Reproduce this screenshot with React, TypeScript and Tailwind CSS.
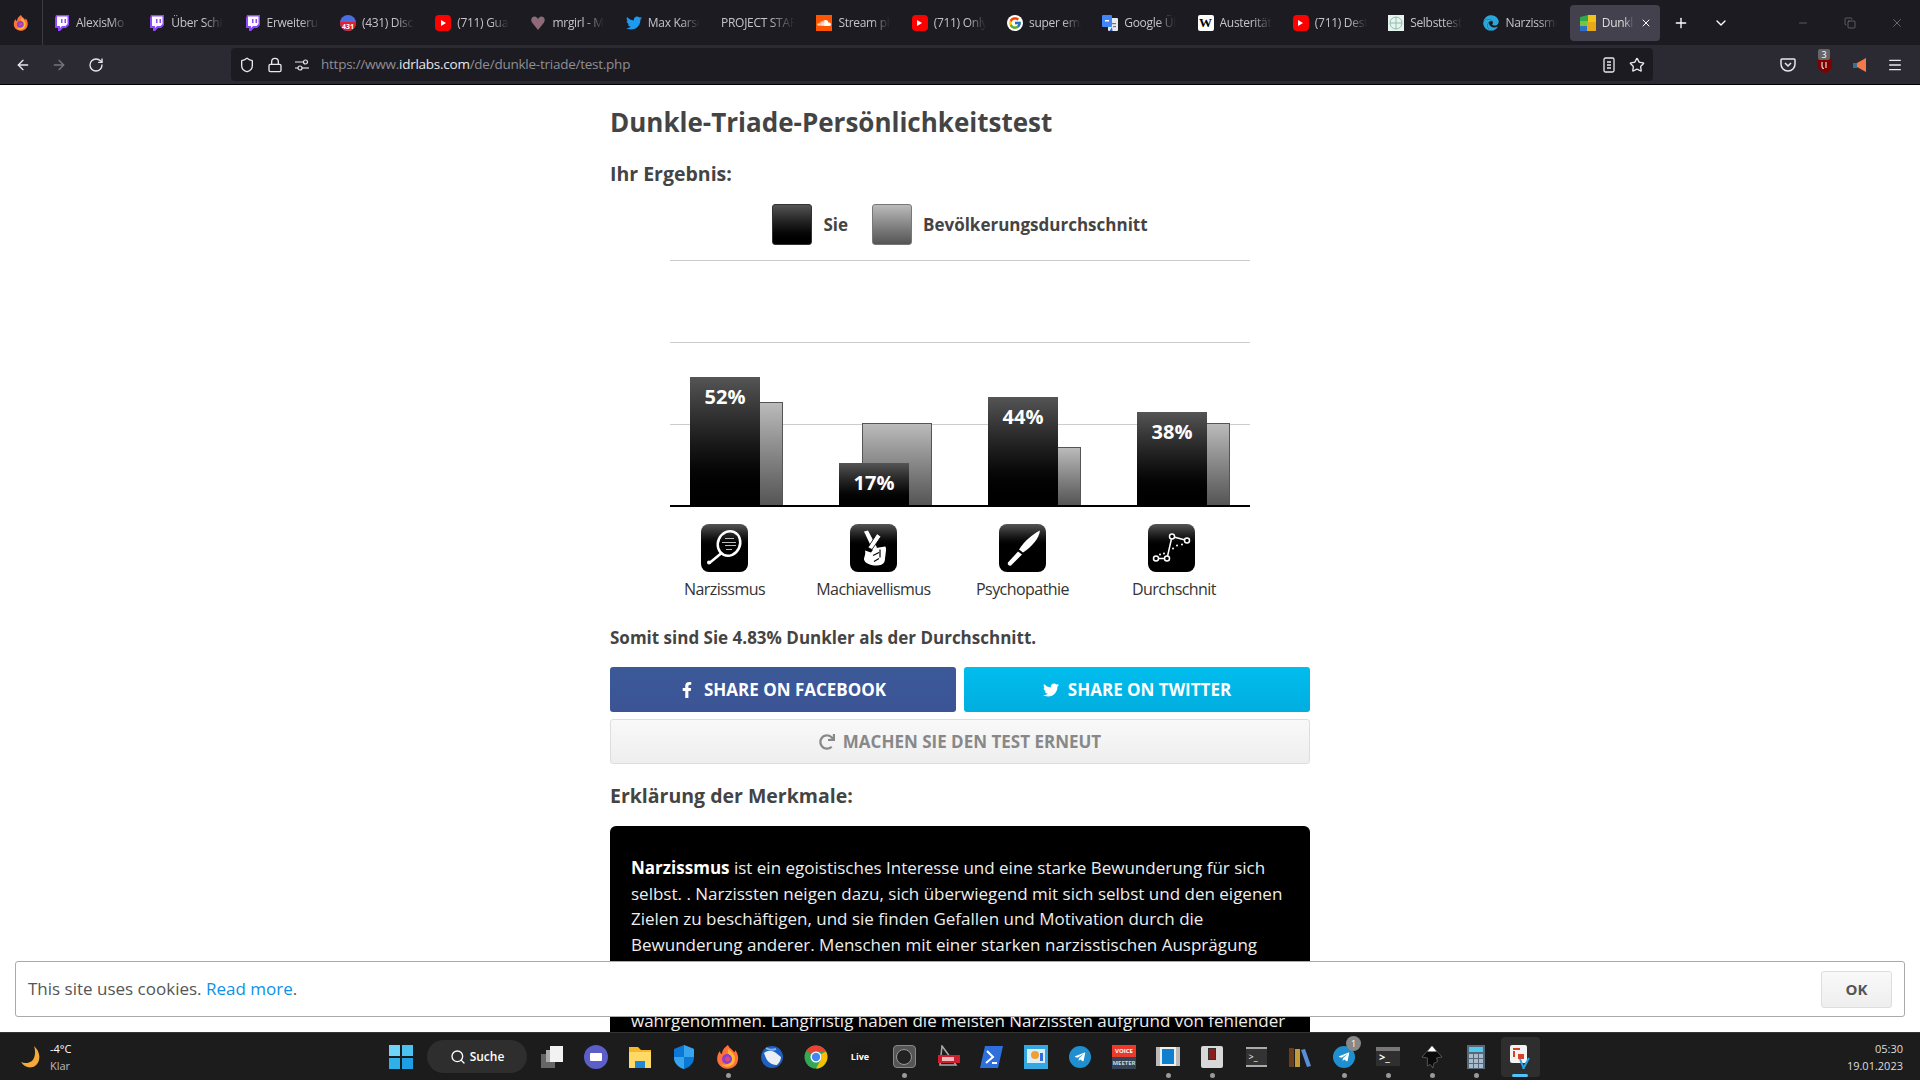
import React from 'react';
import { ArrowLeft, ArrowRight, RotateCw, Shield, Lock, Star, Menu, Plus, ChevronDown, Minus, Copy, X, Search } from 'lucide-react';
import { FaTwitter, FaSoundcloud, FaFacebookF, FaRedo, FaEdge, FaTelegramPlane } from 'react-icons/fa';
import { FcGoogle } from 'react-icons/fc';

const sans = 'font-["Open_Sans",sans-serif]';

const Yt = () => (
    <span className="w-4 h-4 rounded-[4px] bg-[#f00] flex items-center justify-center">
        <span className="w-0 h-0 border-y-[3px] border-y-transparent border-l-[5px] border-l-white" />
    </span>
);
const Tw = () => (
    <svg viewBox="0 0 16 16" className="w-4 h-4">
        <path d="M2 0 1 3v10h3v3h2l3-3h3l3-3V0Z" fill="#9146ff" />
        <path d="M3 1.500h10.500v7.500l-2 2H8l-2 2v-2H3Z" fill="#fff" />
        <path d="M7 4h1.500v4H7Zm3.500 0H12v4h-1.500Z" fill="#9146ff" />
    </svg>
);
const Firefox = ({ className }: { className: string }) => (
    <svg viewBox="0 0 24 24" className={className}>
        <path d="M12 0c1 3 4 4 6 7 1 .5 1-1 1-2 4 4 4 11 1 15a11 11 0 0 1-18-2C0 13 2 8 4 6c0 2 1 3 2 3 0-4 3-7 6-9Z" fill="#ff7139" />
        <path d="M12 4c3 2 7 5 7 10a8 8 0 0 1-14 5c4 2 9 0 9-5 0-3-3-5-2-10Z" fill="#ffb52e" />
        <circle cx="11" cy="14" r="5" fill="#8a3fd1" />
        <circle cx="11.500" cy="14" r="2.500" fill="#e0457b" />
    </svg>
);
const Chrome = () => (
    <svg viewBox="0 0 24 24" className="w-6 h-6">
        <circle cx="12" cy="12" r="11.500" fill="#34a853" />
        <path d="M22 6.500A11.500 11.500 0 0 1 12 23.500l4.800-8.700a5.500 5.500 0 0 0 0-5.600Z" fill="#fbbc04" />
        <path d="M12 .5a11.500 11.500 0 0 1 10 6H12a5.500 5.500 0 0 0-4.800 2.800L2.500 5.500A11.500 11.500 0 0 1 12 .5Z" fill="#ea4335" />
        <circle cx="12" cy="12" r="5.500" fill="#fff" />
        <circle cx="12" cy="12" r="4.200" fill="#4285f4" />
    </svg>
);

const TABS: { title: string; icon: React.ReactNode }[] = [
    { title: 'AlexisMo', icon: <Tw /> },
    { title: 'Über Schi', icon: <Tw /> },
    { title: 'Erweiteru', icon: <Tw /> },
    {
        title: '(431) Disc',
        icon: (
            <span className="w-4 h-4 rounded-full bg-[#4a6ee0] flex items-end justify-center overflow-hidden">
                <span className="w-4 h-[9px] bg-[#e0202a] text-white text-[7px] leading-[9px] font-bold text-center">431</span>
            </span>
        ),
    },
    { title: '(711) Gua', icon: <Yt /> },
    {
        title: 'mrgirl - M',
        icon: (
            <svg viewBox="0 0 16 16" className="w-4 h-4">
                <path d="M8 15 2 7.500C0 4 2.500 1 5 1.500 6.500 1.800 7.500 3 8 4c.5-1 1.500-2.200 3-2.500C13.500 1 16 4 14 7.500Z" fill="#8e6a78" />
            </svg>
        ),
    },
    { title: 'Max Karso', icon: <FaTwitter className="w-4 h-4 text-[#1d9bf0]" /> },
    { title: 'PROJECT STAR', icon: null },
    {
        title: 'Stream ph',
        icon: (
            <span className="w-4 h-4 bg-[#ff5500] flex items-center justify-center">
                <FaSoundcloud className="w-3.5 h-3.5 text-white" />
            </span>
        ),
    },
    { title: '(711) Only', icon: <Yt /> },
    { title: 'super emp', icon: <span className="w-4 h-4 rounded-full bg-white flex items-center justify-center"><FcGoogle className="w-3.5 h-3.5" /></span> },
    {
        title: 'Google Üb',
        icon: (
            <svg viewBox="0 0 16 16" className="w-4 h-4">
                <rect x="6" y="3" width="10" height="13" rx="1" fill="#e8eaed" />
                <rect x="0" y="0" width="10" height="12" rx="1" fill="#4285f4" />
                <path d="M10 12 7.500 16h3Z" fill="#3367d6" />
                <rect x="3" y="5" width="4" height="1.500" fill="#fff" />
                <rect x="10" y="8" width="4" height="1.200" fill="#777" />
                <rect x="11" y="11" width="3" height="1.200" fill="#777" />
            </svg>
        ),
    },
    {
        title: 'Austerität',
        icon: <span className='w-4 h-4 rounded-[2px] bg-white text-black text-[13px] leading-4 text-center font-bold font-["Liberation_Serif",serif]'>W</span>,
    },
    { title: '(711) Dest', icon: <Yt /> },
    {
        title: 'Selbsttest',
        icon: (
            <svg viewBox="0 0 16 16" className="w-4 h-4">
                <rect width="16" height="16" fill="#e8f2ee" />
                <circle cx="8" cy="8" r="6" fill="none" stroke="#8cc0ac" strokeWidth="1" />
                <path d="M8 2v12M2 8h12" stroke="#8cc0ac" strokeWidth="1" />
            </svg>
        ),
    },
    { title: 'Narzissmu', icon: <FaEdge className="w-4 h-4 text-[#2aa6d8]" /> },
];

const Win = () => (
    <div className="grid grid-cols-2 gap-[2px] w-6 h-6">
        <span className="bg-[#6fd4f7]" />
        <span className="bg-[#4cc2f1]" />
        <span className="bg-[#2fb0ea]" />
        <span className="bg-[#1d9fe4]" />
    </div>
);

const TASK_ICONS: { icon: React.ReactNode; dot?: boolean; active?: boolean; badge?: string }[] = [
    {
        icon: (
            <svg viewBox="0 0 24 24" className="w-6 h-6">
                <rect x="1" y="9" width="14" height="14" fill="#666" />
                <rect x="6" y="5" width="12" height="12" fill="#aaa" />
                <rect x="10" y="1" width="13" height="16" fill="#f2f2f2" />
            </svg>
        ),
    },
    {
        icon: (
            <span className="w-6 h-6 rounded-full bg-[#5b5fc7] flex items-center justify-center">
                <span className="w-3 h-2 bg-white rounded-[1px]" />
            </span>
        ),
    },
    {
        icon: (
            <svg viewBox="0 0 24 24" className="w-6 h-6">
                <path d="M1 2h9l3 3h10v18H1Z" fill="#f6b72b" />
                <rect x="1" y="7" width="22" height="16" fill="#ffd966" />
                <rect x="7" y="16" width="10" height="7" fill="#1e88d8" />
            </svg>
        ),
    },
    {
        icon: (
            <svg viewBox="0 0 24 24" className="w-6 h-6">
                <path d="M12 0 22 4v8c0 6-4 10-10 12C6 22 2 18 2 12V4Z" fill="#0a78d4" />
                <path d="M12 0 22 4v8H12Zm0 12v12C6 22 2 18 2 12Z" fill="#37a5ee" />
            </svg>
        ),
    },
    { icon: <Firefox className="w-6 h-6" />, dot: true },
    {
        icon: (
            <svg viewBox="0 0 24 24" className="w-6 h-6">
                <circle cx="12" cy="12" r="11" fill="#1f5fc0" />
                <path d="M4 8c4-3 8-3 12 0l5 4c0 3-2 6-4 8-4 0-8-2-10-5-1-2-2-4-3-7Z" fill="#e9eef5" />
                <path d="M6 3c3 2 7 2 10 1" stroke="#7fb2ee" strokeWidth="2" fill="none" />
            </svg>
        ),
    },
    { icon: <Chrome /> },
    {
        icon: <span className="w-6 h-6 bg-[#1b1b1b] text-white text-[9px] leading-6 text-center font-bold">Live</span>,
    },
    {
        icon: (
            <span className="w-[23px] h-[23px] rounded-[4px] bg-[#555] border border-[#888] flex items-center justify-center">
                <span className="w-4 h-4 rounded-full bg-[#222] border border-[#999]" />
            </span>
        ),
        dot: true,
    },
    {
        icon: (
            <svg viewBox="0 0 24 24" className="w-6 h-6">
                <path d="M6 1 20 20H4Z" fill="none" stroke="#aaa" strokeWidth="1.500" />
                <rect x="2" y="10" width="22" height="8" fill="#cf1f2e" />
                <rect x="6" y="12" width="12" height="4" fill="#f3b8bc" />
            </svg>
        ),
    },
    {
        icon: (
            <svg viewBox="0 0 24 24" className="w-6 h-6">
                <path d="M5 1h18l-5 22H0Z" fill="#2f6fdb" />
                <path d="m7 6 6 6-7 6" fill="none" stroke="#fff" strokeWidth="2" />
                <path d="M12 18h5" stroke="#fff" strokeWidth="2" />
            </svg>
        ),
    },
    {
        icon: (
            <svg viewBox="0 0 24 24" className="w-6 h-6">
                <rect width="24" height="24" fill="#35a7e0" />
                <rect x="3" y="4" width="18" height="14" fill="#d8eefa" />
                <circle cx="11" cy="10" r="4" fill="#f0a030" />
                <rect x="16" y="8" width="3" height="8" fill="#2f6fdb" />
            </svg>
        ),
    },
    {
        icon: (
            <span className="w-[22px] h-[22px] rounded-full bg-[#1f8fd0] flex items-center justify-center">
                <FaTelegramPlane className="w-3 h-3 text-white" />
            </span>
        ),
    },
    {
        icon: (
            <span className="w-6 flex flex-col text-[6px] font-bold text-center leading-[12px]">
                <span className="bg-[#ea3a2c] text-white h-[12px]">VOICE</span>
                <span className="bg-[#344454] text-[#cdd5dd] h-[12px]">MEETER</span>
            </span>
        ),
    },
    {
        icon: (
            <span className="w-6 h-[19px] bg-[#eee] border-x-[4px] border-[#bbb] flex items-center justify-center">
                <span className="w-3 h-[15px] bg-[#0f7fd0]" />
            </span>
        ),
        dot: true,
    },
    {
        icon: (
            <span className="w-[22px] h-[22px] bg-[#d8d8d8] rounded-[2px] flex items-start justify-center pt-[2px]">
                <span className="w-2 h-3 bg-[#8b1f1f] border border-[#333]" />
            </span>
        ),
        dot: true,
    },
    {
        icon: (
            <span className="w-[21px] h-[20px] bg-[#333] border-y-[2px] border-[#aaa] text-white text-[9px] leading-none pl-[3px] pt-[3px]">&gt;_</span>
        ),
    },
    {
        icon: (
            <svg viewBox="0 0 22 20" className="w-[22px] h-[20px]">
                <rect x="0" y="1" width="5" height="19" fill="#6b3d1a" />
                <rect x="6" y="2" width="5" height="18" fill="#c59a3a" />
                <path d="m12 3 4-1 6 17-4 1Z" fill="#5a8ed8" />
            </svg>
        ),
    },
    {
        icon: (
            <span className="w-[22px] h-[22px] rounded-full bg-[#1f8fd0] flex items-center justify-center">
                <FaTelegramPlane className="w-3 h-3 text-white" />
            </span>
        ),
        dot: true,
        badge: '1',
    },
    {
        icon: (
            <span className="w-6 h-[19px] bg-[#2f2f2f] border-t-[4px] border-[#777] text-white text-[11px] font-bold leading-none pl-[3px]">&gt;_</span>
        ),
        dot: true,
    },
    {
        icon: (
            <svg viewBox="0 0 24 24" className="w-[22px] h-[22px]">
                <path d="M12 0 23 12l-6 1 1 4-4 2-1 5-3-4-3 2V13L1 12Z" fill="#0a0a0a" stroke="#777" strokeWidth=".7" />
                <path d="M12 0 17 6H7Z" fill="#fff" />
            </svg>
        ),
        dot: true,
    },
    {
        icon: (
            <svg viewBox="0 0 18 24" className="w-[18px] h-6">
                <rect width="18" height="24" fill="#56687a" />
                <rect x="2" y="2" width="14" height="5" fill="#54c7ec" />
                <path d="M2 9h4v4H2Zm5 0h4v4H7Zm5 0h4v4h-4ZM2 14h4v4H2Zm5 0h4v4H7Zm5 0h4v4h-4ZM2 19h4v4H2Zm5 0h4v4H7Zm5 0h4v4h-4Z" fill="#a8bccb" />
            </svg>
        ),
        dot: true,
    },
    {
        icon: (
            <svg viewBox="0 0 24 24" className="w-6 h-6">
                <rect x="2" y="0" width="17" height="18" rx="2" fill="#f3f3f3" />
                <path d="M5 3h7v2H5Zm0 3h2v6H5Zm5 3h6v5h-6Z" fill="#d9402a" />
                <path d="m12 14 4 10M21 13l-6 11" stroke="#29a3e6" strokeWidth="2" fill="none" />
            </svg>
        ),
        active: true,
    },
];

const MirrorIcon = () => (
    <svg viewBox="0 0 47 47" className="w-full h-full">
        <ellipse cx="28" cy="19" rx="11" ry="12.500" transform="rotate(25 28 19)" fill="none" stroke="#fff" strokeWidth="2.500" />
        <path d="M24 14h9M21 18h14M24 21h11M25 25h6" stroke="#bbb" strokeWidth="1" />
        <path d="M20 29 9 38" stroke="#fff" strokeWidth="2.500" strokeLinecap="round" />
        <circle cx="8" cy="38" r="2" fill="#fff" />
    </svg>
);

const FingersIcon = () => (
    <svg viewBox="0 0 47 47" className="w-full h-full">
        <path d="M14 7 18 6 27 23 23 26Z" fill="#fff" />
        <path d="M27 9 31 12 22 25 18 23Z" fill="#fff" stroke="#000" strokeWidth=".8" />
        <path d="M15 26l6 2 3-4 5-1 6-1c1 0 1 2 1 4l-1 8c0 4-2 7-8 7-6 0-12-2-13-6 0-3 2-5 1-9Z" fill="#fff" />
        <path d="M23 31l6-3M30 25v8M24 37l5-3" stroke="#000" strokeWidth="1.200" fill="none" />
    </svg>
);

const KnifeIcon = () => (
    <svg viewBox="0 0 47 47" className="w-full h-full">
        <path d="M41 6c-1 8-8 16-17 22l-4-3C26 16 33 10 41 6Z" fill="#fff" />
        <path d="M19 27l4 3-11 11c-2 1-4-1-3-3Z" fill="#fff" />
    </svg>
);

const TrendIcon = () => (
    <svg viewBox="0 0 47 47" className="w-full h-full">
        <path d="M8 34h11l5-22 15 4" fill="none" stroke="#fff" strokeWidth="1.500" />
        <g fill="#000" stroke="#fff" strokeWidth="1.500">
            <circle cx="8" cy="34" r="2.500" />
            <circle cx="19" cy="34" r="2.500" />
            <circle cx="24" cy="12" r="2.500" />
            <circle cx="39" cy="16" r="2.500" />
        </g>
        <g fill="#fff">
            <circle cx="12" cy="30" r="1" />
            <circle cx="16" cy="29" r="1" />
            <circle cx="25" cy="24" r="1" />
            <circle cx="29" cy="21" r="1" />
            <circle cx="34" cy="20" r="1" />
        </g>
    </svg>
);

const TRAITS = [
    { label: 'Narzissmus', you: 52, avg: 42, icon: <MirrorIcon />, labelClass: '' },
    { label: 'Machiavellismus', you: 17, avg: 33.200, icon: <FingersIcon />, labelClass: '' },
    { label: 'Psychopathie', you: 44, avg: 23.500, icon: <KnifeIcon />, labelClass: '' },
    { label: 'Durchschnit', you: 38, avg: 33.200, icon: <TrendIcon />, labelClass: 'ml-[5px]' },
];

const Swatch = ({ light }: { light?: boolean }) => (
    <span className={`w-10 h-[41px] rounded-[3px] border ${light ? 'border-[#777] bg-gradient-to-b from-[#bbb] to-[#555]' : 'border-[#333] bg-gradient-to-b from-[#555] to-black'}`} />
);

export default function App() {
    return (
        <div className={`h-screen w-full overflow-hidden flex flex-col bg-white ${sans}`}>
            {/* Tab strip */}
            <div className="h-[45px] shrink-0 bg-[#1c1b22] flex items-center text-[#c4c4c8]">
                <div className="w-[43px] h-full flex items-center justify-center border-r border-[#3a3944]">
                    <Firefox className="w-4 h-4" />
                </div>
                <div className="flex pl-[1px]">
                    {TABS.map((tab) => (
                        <div key={tab.title} className="w-[95.300px] pl-[10px] flex items-center gap-[6px]">
                            {tab.icon && <span className="shrink-0 flex">{tab.icon}</span>}
                            <span className={`${tab.icon ? 'w-[52px]' : 'w-[74px]'} grow-0 overflow-hidden whitespace-nowrap text-[12px] tracking-[-0.3px] [mask-image:linear-gradient(to_right,black_65%,transparent)]`}>{tab.title}</span>
                        </div>
                    ))}
                </div>
                <div className="w-[90px] h-[36px] ml-[1px] rounded-[4px] bg-[#42414d] flex items-center pl-[10px] gap-[6px]">
                    <svg viewBox="0 0 16 16" className="w-4 h-4 shrink-0">
                        <path d="M0 2 8 0v6H0Z" fill="#2ea84a" />
                        <path d="M8 0h8v7H8Z" fill="#f0c419" />
                        <path d="M0 6h8v5H0Z" fill="#7cc242" />
                        <path d="M0 11h7v5H0Z" fill="#2c6fc4" />
                        <path d="M7 7h9v9H7Z" fill="#e6a817" />
                    </svg>
                    <span className="w-[32px] overflow-hidden whitespace-nowrap text-[12px] text-[#ddd] tracking-[-0.3px] [mask-image:linear-gradient(to_right,black_70%,transparent)]">Dunkle</span>
                    <X className="w-3 h-3 text-white shrink-0" />
                </div>
                <div className="w-[42px] flex justify-center">
                    <Plus className="w-4 h-4 text-white" />
                </div>
                <div className="w-[38px] flex justify-center">
                    <ChevronDown className="w-4 h-4 text-white" />
                </div>
                <div className="flex-1 flex justify-end items-center text-[#888]">
                    <span className="w-[46px] flex justify-center"><Minus className="w-3 h-3" strokeWidth={1.2} /></span>
                    <span className="w-[48px] flex justify-center"><Copy className="w-3 h-3" strokeWidth={1.2} /></span>
                    <span className="w-[46px] flex justify-center"><X className="w-3.5 h-3.5" strokeWidth={1.2} /></span>
                </div>
            </div>

            {/* Toolbar */}
            <div className="h-[40px] shrink-0 bg-[#2b2a33] border-b border-black flex items-center text-[#e8e8ea]">
                <div className="w-[231px] flex items-center pl-[15px]">
                    <ArrowLeft className="w-4 h-4" />
                    <ArrowRight className="w-4 h-4 ml-[20px] text-[#77767d]" />
                    <RotateCw className="w-4 h-4 ml-[21px]" />
                </div>
                <div className="w-[1422px] h-[33px] rounded-[4px] bg-[#1c1b22] flex items-center pl-[8px] pr-[8px]">
                    <Shield className="w-4 h-4" />
                    <Lock className="w-4 h-4 ml-[12px]" />
                    <svg viewBox="0 0 16 16" className="w-4 h-4 ml-[11px]" fill="none" stroke="#e8e8ea" strokeWidth="1.200">
                        <path d="M1 5h8M1 11h3" />
                        <circle cx="11.500" cy="5" r="2" />
                        <circle cx="6" cy="11" r="2" />
                        <path d="M8 11h7" />
                    </svg>
                    <span className="ml-[11px] text-[13.500px] text-[#8f8f94] tracking-[-0.25px] whitespace-nowrap">
                        https://www.<span className="text-[#e8e8ea]">idrlabs.com</span>/de/dunkle-triade/test.php
                    </span>
                    <span className="ml-auto flex items-center gap-[12px]">
                        <svg viewBox="0 0 16 16" className="w-4 h-4" fill="none" stroke="#e8e8ea" strokeWidth="1.300">
                            <rect x="3" y="1" width="10" height="14" rx="1.500" />
                            <path d="M6 5h4M6 8h4M6 11h4" />
                        </svg>
                        <Star className="w-4 h-4" />
                    </span>
                </div>
                <div className="flex-1 flex items-center justify-end pr-[17px]">
                    <svg viewBox="0 0 16 16" className="w-4 h-4 mr-[21px]">
                        <path d="M2 2h12c1 0 1 1 1 1v4c0 4-3 7-7 7s-7-3-7-7V3s0-1 1-1Z" fill="none" stroke="#e8e8ea" strokeWidth="1.500" />
                        <path d="m5 6 3 3 3-3" fill="none" stroke="#e8e8ea" strokeWidth="1.500" />
                    </svg>
                    <span className="relative w-4 h-4 mr-[19px]">
                        <svg viewBox="0 0 16 16" className="w-4 h-4">
                            <path d="M8 0 15 2v6c0 4-3 7-7 8-4-1-7-4-7-8V2Z" fill="#800000" />
                            <path d="M5 5v4c0 2 1 2.500 2 2.500M9 5v6" fill="none" stroke="#ddd" strokeWidth="1.200" />
                        </svg>
                        <span className="absolute left-[1px] top-[-8px] w-3 h-[11px] rounded-[2px] bg-[#666] text-white text-[9px] leading-[11px] text-center">3</span>
                    </span>
                    <svg viewBox="0 0 16 16" className="w-4 h-4 mr-[19px]">
                        <path d="M14 1v14L5 10H2V6h3Z" fill="#f4794a" />
                        <path d="M1 6h4v5H1Z" fill="#3b6f90" />
                    </svg>
                    <Menu className="w-4 h-4" />
                </div>
            </div>

            {/* Page */}
            <div className="relative flex-1 min-h-0 overflow-hidden">
                <div className="w-[700px] mx-auto text-[#444]">
                    <h1 className="mt-[19px] text-[26px] leading-[36px] font-bold">Dunkle-Triade-Persönlichkeitstest</h1>
                    <h2 className="mt-[20px] text-[19.500px] leading-[28px] font-bold">Ihr Ergebnis:</h2>

                    <div className="mt-[16px] flex items-center justify-center text-[17px] font-bold">
                        <Swatch />
                        <span className="ml-[11px]">Sie</span>
                        <span className="ml-[24px] flex"><Swatch light /></span>
                        <span className="ml-[11px]">Bevölkerungsdurchschnitt</span>
                    </div>

                    <div className="mx-[60px] mt-[15px]">
                        <div className="relative h-[247px] border-b-2 border-black">
                            {/* Gridlines */}
                            <div className="absolute inset-x-0 top-0 h-px bg-[#ccc]" />
                            <div className="absolute inset-x-0 top-[82px] h-px bg-[#ccc]" />
                            <div className="absolute inset-x-0 top-[164px] h-px bg-[#ccc]" />

                            <div className="relative h-full flex items-end pl-[20px] gap-[56px]">
                                {TRAITS.map((t) => (
                                    <div key={t.label} className="relative flex items-end w-[93px] h-full">
                                        <div className="absolute bottom-0 left-[23px] w-[70px] border border-b-0 border-[#555] bg-gradient-to-b from-[#bbb] to-[#555]" style={{ height: `${t.avg * 2.46}px` }} />
                                        <div className="relative w-[70px] bg-gradient-to-b from-[#555] to-black text-white text-[20px] leading-[28px] font-bold text-center pt-[6px]" style={{ height: `${t.you * 2.46}px` }}>
                                            {t.you}%
                                        </div>
                                    </div>
                                ))}
                            </div>
                        </div>

                        <div className="ml-[-20px] mt-[17px] grid grid-cols-[repeat(4,149px)]">
                            {TRAITS.map((t) => (
                                <div key={t.label} className="flex flex-col items-center">
                                    <div className="w-[47px] h-[48px] rounded-[8px] bg-gradient-to-b from-[#555] via-black to-black">{t.icon}</div>
                                    <span className={`mt-[5px] text-[16px] leading-[24px] text-[#333] tracking-[-0.55px] whitespace-nowrap ${t.labelClass}`}>{t.label}</span>
                                </div>
                            ))}
                        </div>
                    </div>

                    <p className="mt-[25px] text-[17px] leading-[24px] font-bold">Somit sind Sie 4.83% Dunkler als der Durchschnitt.</p>

                    <div className="mt-[17px] grid grid-cols-2 gap-[8px]">
                        <button className="h-[45px] rounded-[3px] bg-gradient-to-b from-[#3b5998] to-[#3b5495] text-white text-[17px] font-bold flex items-center justify-center gap-[10px]">
                            <FaFacebookF className="w-3.5 h-4" /> SHARE ON FACEBOOK
                        </button>
                        <button className="h-[45px] rounded-[3px] bg-gradient-to-b from-[#00bdee] to-[#00aedf] text-white text-[17px] font-bold flex items-center justify-center gap-[9px]">
                            <FaTwitter className="w-4 h-4" /> SHARE ON TWITTER
                        </button>
                    </div>
                    <button className="mt-[7px] w-full h-[45px] rounded-[3px] border border-[#ddd] bg-gradient-to-b from-[#f9f9f9] to-[#eee] text-[#888] text-[17px] font-bold flex items-center justify-center gap-[8px]">
                        <FaRedo className="w-4 h-4" /> MACHEN SIE DEN TEST ERNEUT
                    </button>

                    <h2 className="mt-[18px] text-[19.500px] leading-[28px] font-bold">Erklärung der Merkmale:</h2>

                    <div className="mt-[16px] bg-black rounded-t-[6px] text-[#eee] text-[17px] leading-[25.500px] px-[21px] pt-[29px] pb-[40px] whitespace-nowrap">
                        <strong className="text-white">Narzissmus</strong> ist ein egoistisches Interesse und eine starke Bewunderung für sich<br />
                        selbst. . Narzissten neigen dazu, sich überwiegend mit sich selbst und den eigenen<br />
                        Zielen zu beschäftigen, und sie finden Gefallen und Motivation durch die<br />
                        Bewunderung anderer. Menschen mit einer starken narzisstischen Ausprägung<br />
                        zeigen oft wenig Einfühlungsvermögen für ihre Mitmenschen und werden<br />
                        von diesen häufig als arrogant und selbstbezogen<br />
                        wahrgenommen. Langfristig haben die meisten Narzissten aufgrund von fehlender
                    </div>
                </div>

                {/* Cookie notice */}
                <div className="absolute left-[15px] right-[15px] bottom-[15px] h-[56px] bg-white border border-[#aaa] rounded-[3px] flex items-center justify-between pl-[12px] pr-[12px] text-[17px] text-[#555]">
                    <span>
                        This site uses cookies. <a className="text-[#0e90e8]">Read more</a>.
                    </span>
                    <button className="w-[71px] h-[37px] rounded-[3px] border border-[#ddd] bg-gradient-to-b from-[#f9f9f9] to-[#eee] text-[15px] font-bold text-[#555]">OK</button>
                </div>
            </div>

            {/* Taskbar */}
            <div className="h-[48px] shrink-0 bg-[#1c1c1c] border-t border-[#333] flex items-center text-white">
                <div className="w-[379px] flex items-center pl-[19px]">
                    <svg viewBox="0 0 24 24" className="w-6 h-6">
                        <path d="M15 1c2 6 1 12-2 15-3 2-7 3-11 1 3 5 9 7 14 4 6-4 6-14-1-20Z" fill="#f4a93a" />
                    </svg>
                    <div className="ml-[7px] text-[11px] leading-[17px]">
                        <div>-4°C</div>
                        <div className="text-[#bbb]">Klar</div>
                    </div>
                </div>
                <div className="w-[44px] flex justify-center"><Win /></div>
                <div className="ml-[4px] w-[100px] h-[33px] rounded-full bg-[#2e2e2e] flex items-center justify-center gap-[4px] text-[12px] font-semibold">
                    <Search className="w-4 h-4" /> Suche
                </div>
                <div className="ml-[3px] flex">
                    {TASK_ICONS.map((item, i) => (
                        <div key={i} className="relative w-[44px] h-[46px] flex items-center justify-center">
                            {item.active && <span className="absolute left-[3px] top-[3px] w-[39px] h-[40px] rounded-[4px] bg-[#2e2e2e]" />}
                            <span className="relative flex">{item.icon}</span>
                            {item.dot && <span className="absolute bottom-[2px] w-[5px] h-[5px] rounded-full bg-[#999]" />}
                            {item.active && <span className="absolute bottom-[3px] w-4 h-[3px] rounded-full bg-[#4fc3f7]" />}
                            {item.badge && <span className="absolute top-[2px] right-[5px] w-[15px] h-[15px] rounded-full bg-[#888] text-[9px] leading-[15px] text-center">{item.badge}</span>}
                        </div>
                    ))}
                </div>
                <div className="ml-auto pr-[17px] text-right text-[11px] leading-[17px] text-[#ddd]">
                    <div>05:30</div>
                    <div>19.01.2023</div>
                </div>
            </div>
        </div>
    );
}
